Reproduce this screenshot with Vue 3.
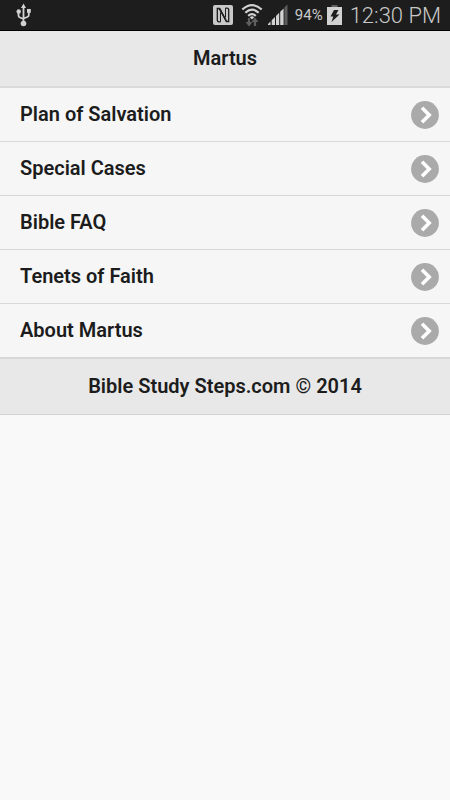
<script setup>
const items = [
  'Plan of Salvation',
  'Special Cases',
  'Bible FAQ',
  'Tenets of Faith',
  'About Martus'
]
</script>

<template>
  <div class="screen">
    <div class="status">
      <svg class="usb" width="16" height="24" viewBox="0 0 16 24" fill="none" stroke="#d2d2d2" stroke-width="1.8">
        <path d="M7.500 20V4M2.500 9v3.500q0 1.500 1.500 2l3.500 1.500M12.800 8v4q0 1.500-1.500 2l-3.800 1.500" />
        <path d="M7.500 .5 5 5h5zM11 6h3.800v3.800H11z" fill="#d2d2d2" stroke="none" />
        <circle cx="2.700" cy="8.500" r="2.200" fill="#d2d2d2" stroke="none" />
        <circle cx="7.500" cy="20.500" r="2.800" fill="#d2d2d2" stroke="none" />
      </svg>
      <div class="indicators">
        <svg class="nfc" width="20" height="20" viewBox="0 0 20 20">
          <rect width="20" height="20" rx="2" fill="#c9c9c9" />
          <path d="M7.500 16.800H6Q4.300 16.800 4.300 15V3.500H6.500L13.500 16.500H15.700V5Q15.700 3.200 14 3.200H12.500" fill="none" stroke="#1d1d1d" stroke-width="1.300" />
          <path d="M7.500 7.500V16.800M12.500 3.200V12.500" fill="none" stroke="#1d1d1d" stroke-width="1" />
          <path d="M5.500 3.500H7.500L14.300 16.500H12.800z" fill="#1d1d1d" />
        </svg>
        <svg class="wifi" width="22" height="24" viewBox="0 0 22 24" fill="none">
          <path d="M1.300 6.500Q11-2.200 20.700 6.500M4.300 9.800Q11 3.600 17.700 9.800M7.200 12.900Q11 9.400 14.800 12.900" stroke="#d2d2d2" stroke-width="2.200" />
          <path d="M8.800 14.200Q11 12.500 13.200 14.200L11 16.500z" fill="#d2d2d2" />
          <path d="M8 15v5M14 23v-5" stroke="#606060" stroke-width="2.200" />
          <path d="m4.500 19 3.500 4.500 3.500-4.500zM10.500 19l3.500-4.500 3.500 4.500z" fill="#606060" />
        </svg>
        <svg class="signal" width="22" height="22" viewBox="0 0 22 22">
          <path d="M1 21v-1l2.500-2.500V21zM4.700 21v-4.700L8 13v8zM9 21v-9L12.200 8.800V21zM13.200 21V7.800L16.600 4.400V21z" fill="#d2d2d2" />
          <path d="M17.400 3.600 20.500 .5V21h-3.100z" fill="#5d5d5d" />
        </svg>
        <span class="percent">94%</span>
        <svg class="battery" width="15" height="22" viewBox="0 0 15 22">
          <path d="M4.500 1h6v2h-6z" fill="#626262" />
          <path d="M0 3h15v18H0z" fill="#d2d2d2" />
          <path d="M7 6h4.500L9 10.500h3.500L4.500 18l1.800-5.500H3.500z" fill="#1d1d1d" />
        </svg>
        <time class="clock">12:30 PM</time>
      </div>
    </div>
    <header class="bar head">
      <h1>Martus</h1>
    </header>
    <nav>
      <ul>
        <li v-for="item in items" :key="item">
          <a href="#">
            <span>{{ item }}</span>
            <svg width="28" height="28" viewBox="0 0 28 28">
              <circle cx="14" cy="14" r="13.900" fill="#aaa" />
              <path d="m11 6.800 7.200 7.200-7.200 7.200" fill="none" stroke="#fff" stroke-width="3.600" />
            </svg>
          </a>
        </li>
      </ul>
    </nav>
    <footer class="bar foot">
      <h2>Bible Study Steps.com © 2014</h2>
    </footer>
  </div>
</template>

<style>
body {
  margin: 0;
  background: #f9f9f9;
}
</style>

<style scoped>
.screen {
  min-height: 100vh;
  font-family: Roboto, "Liberation Sans", sans-serif;
  color: #1c1c1c;
}
.status {
  display: flex;
  align-items: center;
  justify-content: space-between;
  box-sizing: border-box;
  height: 31px;
  padding: 0 9px 0 16px;
  background: #1d1d1d;
  border-bottom: 1px solid #000;
  color: #c9c9c9;
}
.indicators {
  display: flex;
  align-items: center;
}
.wifi {
  margin-left: 8px;
}
.signal {
  margin-left: 4px;
}
.percent {
  margin-left: 6px;
  font-size: 15px;
  line-height: 20px;
}
.battery {
  margin-left: 4px;
}
.clock {
  margin-left: 8px;
  padding-top: 2px;
  font-size: 22px;
  font-weight: 300;
  line-height: 28px;
}
.bar {
  display: flex;
  justify-content: center;
  padding: 14px 20px 15px;
  background: #e8e8e8;
}
.head {
  border-bottom: 2px solid #dadada;
}
.foot {
  border-bottom: 1px solid #d4d4d4;
}
h1,
h2 {
  margin: 0;
  font-size: 20px;
  font-weight: 600;
  line-height: 26px;
}
ul {
  margin: 0;
  padding: 0;
  list-style: none;
}
li {
  border-bottom: 1px solid #d8d8d8;
}
li:last-child {
  border-bottom-width: 2px;
}
a {
  display: flex;
  align-items: center;
  justify-content: space-between;
  padding: 13px 11px 12px 20px;
  background: #f6f6f6;
  color: inherit;
  font-size: 20px;
  font-weight: 600;
  line-height: 26px;
  text-decoration: none;
}
a span {
  padding-bottom: 2px;
}
</style>
